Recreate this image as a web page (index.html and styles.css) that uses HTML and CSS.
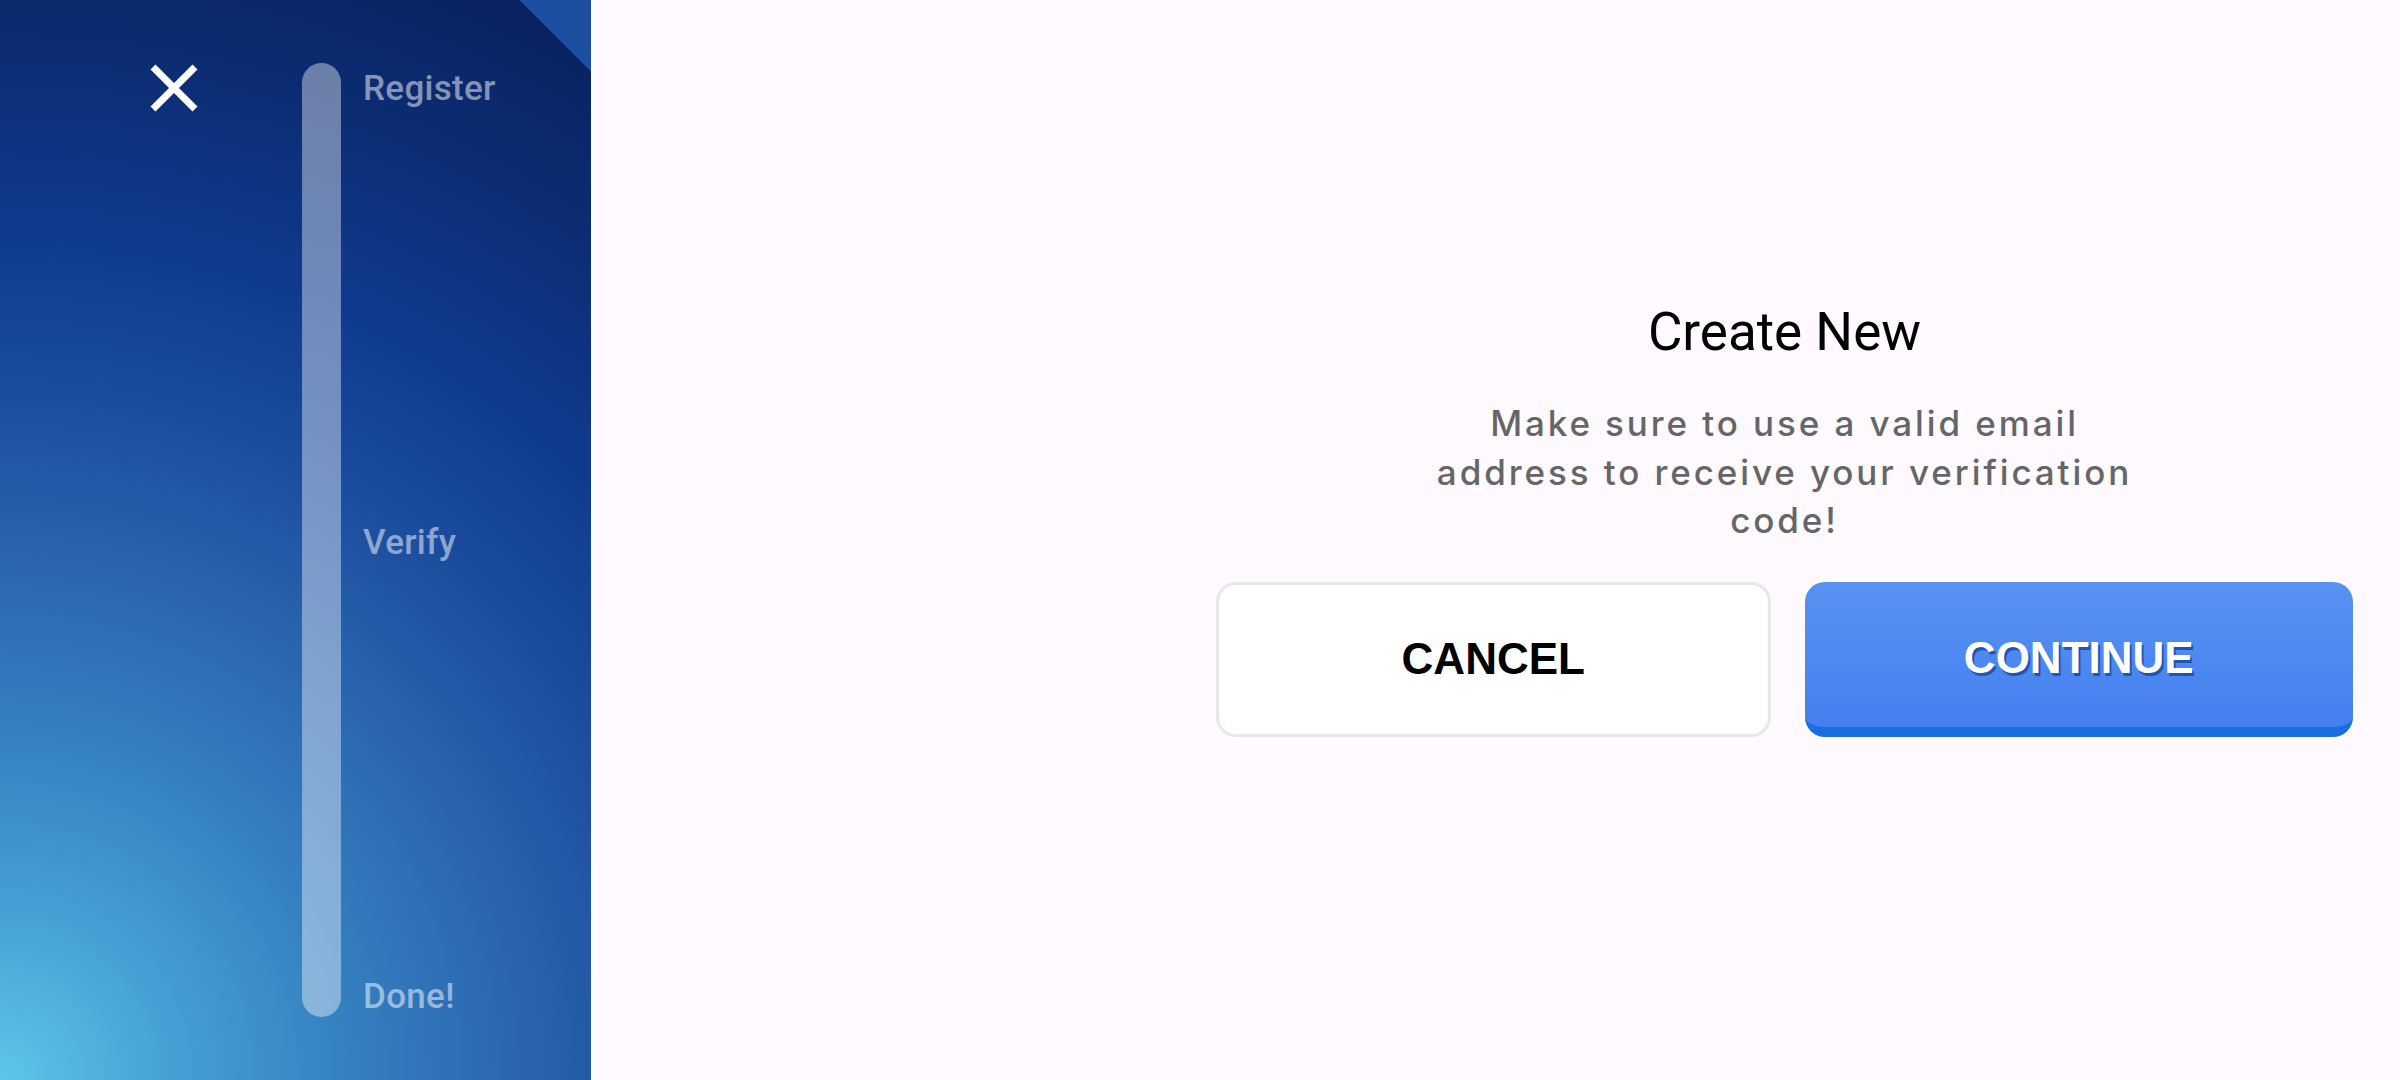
FILE: index.html
```html
<!DOCTYPE html>
<html lang="en">
<head>
<meta charset="utf-8">
<title>Create New</title>
<link rel="stylesheet" href="styles.css">
</head>
<body>
<div class="screen">
  <aside class="side">
    <span class="corner"></span>
    <button class="close" aria-label="Close">
      <svg viewBox="0 0 50 50" width="50" height="50"><path d="M4 4 L46 46 M46 4 L4 46" stroke="#fff" stroke-width="7" fill="none"/></svg>
    </button>
    <div class="stepper">
      <div class="track"></div>
      <div class="labels">
        <span class="label">Register</span>
        <span class="label">Verify</span>
        <span class="label">Done!</span>
      </div>
    </div>
  </aside>
  <main class="main">
    <section class="dialog">
      <h1 class="title">Create New</h1>
      <p class="desc">Make sure to use a valid email<br>address to receive your verification<br>code!</p>
      <div class="actions">
        <button class="btn btn-cancel">CANCEL</button>
        <button class="btn btn-continue">CONTINUE</button>
      </div>
    </section>
  </main>
</div>
</body>
</html>
```
FILE: styles.css
```css
* { box-sizing: border-box; }
html, body { margin: 0; padding: 0; }
body {
  width: 2400px;
  height: 1080px;
  overflow: hidden;
  font-family: Inter, "Noto Sans", sans-serif;
  background: #fefaff;
}
.screen {
  display: flex;
  width: 2400px;
  height: 1080px;
}
.side {
  position: relative;
  flex: 0 0 591px;
  height: 1080px;
  display: flex;
  align-items: flex-start;
  padding: 63px 0 63px 149px;
  gap: 103px;
  background:
    radial-gradient(circle 1250px at 0% 100%, #5cc6ea 0%, #469fd4 14%, #3580c0 28%, #2a64ae 42%, #1a4b9c 56%, #0f3a8c 68%, #0c2d74 82%, #081f5a 100%);
  overflow: hidden;
}
.corner {
  position: absolute;
  top: 0;
  right: 0;
  width: 72px;
  height: 72px;
  background: linear-gradient(45deg, transparent 50%, #1c4f9f 50%);
}
.close {
  flex: 0 0 50px;
  width: 50px;
  height: 50px;
  padding: 0;
  margin: 0;
  border: 0;
  background: none;
  display: block;
}
.close svg { display: block; }
.stepper {
  display: flex;
  gap: 22px;
  height: 954px;
}
.track {
  width: 39px;
  height: 100%;
  border-radius: 20px;
  background: rgba(255, 255, 255, 0.4);
}
.labels {
  display: flex;
  flex-direction: column;
  justify-content: space-between;
  padding: 5px 0 0;
}
.label {
  font-family: Roboto, "Liberation Sans", sans-serif;
  font-weight: 500;
  font-size: 35px;
  letter-spacing: 0.3px;
  color: rgba(255, 255, 255, 0.5);
  line-height: 41px;
}
.main {
  flex: 1;
  display: flex;
  justify-content: flex-end;
  padding: 301px 47px 0 0;
}
.dialog {
  width: 1137px;
  display: flex;
  flex-direction: column;
  align-items: center;
}
.title {
  margin: 0;
  font-family: Roboto, "Liberation Sans", sans-serif;
  font-weight: 400;
  font-size: 53px;
  line-height: 62px;
  color: #000;
}
.desc {
  margin: 36px 0 0;
  font-size: 35px;
  font-weight: 500;
  letter-spacing: 2.9px;
  line-height: 48.5px;
  color: #666666;
  text-align: center;
}
.actions {
  margin-top: 37px;
  display: flex;
  gap: 34px;
  width: 100%;
}
.btn {
  flex: 1;
  height: 155px;
  border-radius: 20px;
  font-family: "Liberation Sans", Arial, sans-serif;
  font-weight: 700;
  font-size: 44px;
  display: flex;
  align-items: center;
  justify-content: center;
  padding: 0;
  margin: 0;
}
.btn-cancel {
  background: #ffffff;
  border: 3px solid #e8e8ea;
  color: #000;
}
.btn-continue {
  background: linear-gradient(180deg, #5892f2 0%, #4480ef 100%);
  border: 0;
  border-bottom: 10px solid #1a6fe0;
  padding-top: 7px;
  color: #fff;
  text-shadow: 2px 3px 0 #1b57b4;
}
```
